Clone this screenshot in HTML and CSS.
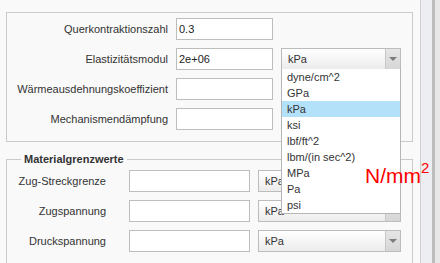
FILE: index.html
```html
<!DOCTYPE html>
<html lang="de">

<head>
  <meta charset="UTF-8">
  <meta name="viewport" content="width=device-width, initial-scale=1.0">
  <title>Material</title>
  <link rel="stylesheet" href="styles.css">
</head>

<body>
  <div class="window">
    <div class="panel">
      <fieldset class="group group-props">
        <div class="row">
          <label class="label">Querkontraktionszahl</label>
          <input class="field" type="text" value="0.3">
        </div>
        <div class="row">
          <label class="label">Elastizitätsmodul</label>
          <input class="field" type="text" value="2e+06">
          <div class="combo">
            <span class="combo-text">kPa</span>
            <span class="combo-btn"><span class="arrow"></span></span>
            <ul class="combo-list">
              <li>dyne/cm^2</li>
              <li>GPa</li>
              <li class="selected">kPa</li>
              <li>ksi</li>
              <li>lbf/ft^2</li>
              <li>lbm/(in sec^2)</li>
              <li>MPa</li>
              <li>Pa</li>
              <li>psi</li>
            </ul>
          </div>
        </div>
        <div class="row">
          <label class="label">Wärmeausdehnungskoeffizient</label>
          <input class="field" type="text" value="">
        </div>
        <div class="row">
          <label class="label">Mechanismendämpfung</label>
          <input class="field" type="text" value="">
        </div>
      </fieldset>

      <fieldset class="group group-limits">
        <legend>Materialgrenzwerte</legend>
        <div class="row">
          <label class="label">Zug-Streckgrenze</label>
          <input class="field" type="text" value="">
          <div class="combo">
            <span class="combo-text">kPa</span>
            <span class="combo-btn"><span class="arrow"></span></span>
          </div>
        </div>
        <div class="row">
          <label class="label">Zugspannung</label>
          <input class="field" type="text" value="">
          <div class="combo">
            <span class="combo-text">kPa</span>
            <span class="combo-btn"><span class="arrow"></span></span>
          </div>
        </div>
        <div class="row">
          <label class="label">Druckspannung</label>
          <input class="field" type="text" value="">
          <div class="combo">
            <span class="combo-text">kPa</span>
            <span class="combo-btn"><span class="arrow"></span></span>
          </div>
        </div>
      </fieldset>
    </div>
    <div class="scroll">
      <div class="track"></div>
      <div class="edge"></div>
    </div>
  </div>

  <div class="unit-note">N/mm<span class="sq">2</span></div>
</body>

</html>
```

FILE: styles.css
```css
body {
  margin: 0;
  background-color: #f9f9f9;
  font-family: "Liberation Sans", Arial, sans-serif;
  font-size: 11px;
  color: #333;
}

.window {
  display: flex;
  height: 263px;
  overflow: hidden;
}

.panel {
  width: 421px;
  flex: none;
  box-sizing: border-box;
  padding: 12px 0 0 6px;
  border-right: 1px solid #cfcfcf;
}

.group {
  width: 407px;
  box-sizing: border-box;
  margin: 0;
  border: 1px solid #cacaca;
  display: flex;
  flex-direction: column;
  gap: 8px;
}

.group-props {
  padding: 5px 0 11px 0;
}

.group-props .label {
  width: 161px;
  margin-right: 8px;
}

.group-props .field {
  width: 97px;
}

.group-props .combo {
  width: 120px;
  margin-left: 8px;
}

.group-limits {
  margin-top: 11px;
  padding: 4px 0 20px 0;
}

.group-limits .label {
  width: 99px;
  margin-right: 23px;
}

.group-limits .field {
  width: 121px;
}

.group-limits .combo {
  width: 143px;
  margin-left: 8px;
}

legend {
  margin-left: 14px;
  padding: 0 3px;
  font-weight: bold;
  font-size: 11px;
  line-height: 13px;
  color: #333;
}

.row {
  display: flex;
  height: 22px;
  align-items: center;
}

.label {
  flex: none;
  text-align: right;
  white-space: nowrap;
}

.field {
  flex: none;
  box-sizing: border-box;
  height: 22px;
  margin: 0;
  padding: 0 2px;
  border: 1px solid #bdbdbd;
  background-color: #fff;
  font-family: "Liberation Sans", Arial, sans-serif;
  font-size: 11px;
  color: #222;
  outline: none;
}

.combo {
  flex: none;
  position: relative;
  display: flex;
  height: 22px;
  box-sizing: border-box;
  border: 1px solid #bcbcbc;
  background: linear-gradient(#ffffff, #ececec);
}

.combo-text {
  flex: 1;
  padding-left: 6px;
  line-height: 20px;
  font-size: 11px;
  color: #333;
}

.combo-btn {
  flex: none;
  width: 14px;
  border-left: 1px solid #c8c8c8;
  background: linear-gradient(#e6e6e6, #d6d6d6);
  display: flex;
  align-items: center;
  justify-content: center;
}

.arrow {
  width: 0;
  height: 0;
  border-left: 4px solid transparent;
  border-right: 4px solid transparent;
  border-top: 4px solid #7c7c7c;
}

.combo-list {
  position: absolute;
  top: 100%;
  left: -1px;
  width: 120px;
  box-sizing: border-box;
  margin: 0;
  padding: 0;
  list-style: none;
  background-color: #fff;
  border: 1px solid #b5b5b5;
  border-top: none;
  z-index: 2;
}

.combo-list li {
  height: 16px;
  line-height: 16px;
  padding-left: 5px;
  font-size: 11px;
  color: #333;
}

.combo-list .selected {
  background-color: #b3e1fa;
}

.scroll {
  display: flex;
  flex: 1;
}

.track {
  width: 11px;
  background-color: #eceef1;
}

.edge {
  width: 3px;
  background-color: #bdbdbd;
}

.scroll::after {
  content: "";
  flex: 1;
  background-color: #e8e8e8;
}

.unit-note {
  position: absolute;
  left: 365px;
  top: 157px;
  font-size: 21px;
  line-height: 21px;
  color: #ff0000;
  z-index: 3;
}

.unit-note .sq {
  font-size: 15px;
  vertical-align: 10px;
}
```
